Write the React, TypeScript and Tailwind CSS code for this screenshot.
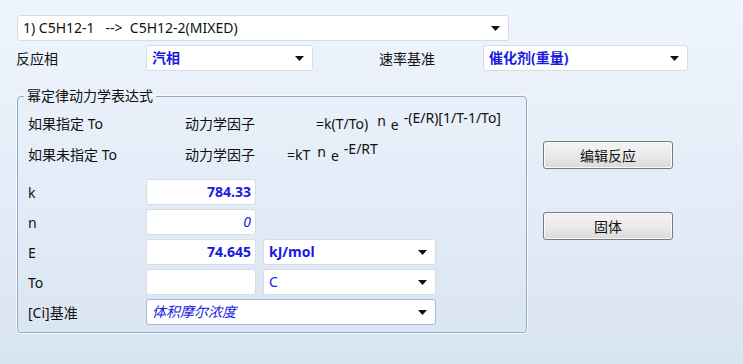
// 幂定律动力学设置面板（静态还原）
const font = "font-['Noto_Sans','Noto_Sans_CJK_SC',sans-serif]"

function Arrow() {
  return (
    <svg width="9" height="5" viewBox="0 0 9 5" aria-hidden="true" className="flex-none">
      <path d="M0 0h9L4.5 5z" fill="#111" />
    </svg>
  )
}

function Combo({ width, text, tone = 'bold', focused = false }: { width: string; text: string; tone?: 'bold' | 'plain' | 'italic' | 'black'; focused?: boolean }) {
  const toneCls =
    tone === 'bold'
      ? 'font-bold text-[#1a1adf]'
      : tone === 'italic'
        ? 'italic text-[#1a1adf]'
        : tone === 'black'
          ? 'text-[#111]'
          : 'text-[#1a1adf]'
  return (
    <div
      className={`${width} flex h-[26px] flex-none items-center justify-between rounded-[3px] border bg-white pl-[5px] pr-[8px] ${
        focused ? 'border-[#9fbadb]' : 'border-[#d6dde6]'
      }`}
    >
      <span className={`whitespace-pre text-[14px] leading-none ${toneCls}`}>{text}</span>
      <Arrow />
    </div>
  )
}

function Field({ value, italic = false }: { value: string; italic?: boolean }) {
  return (
    <div className="flex h-[26px] w-[110px] flex-none items-center justify-end rounded-[3px] border border-[#d6dde6] bg-white pr-[4px]">
      <span className={`text-[14px] leading-none text-[#1a1adf] ${italic ? 'italic' : 'font-bold'}`}>{value}</span>
    </div>
  )
}

function Row({ label, children }: { label: string; children: React.ReactNode }) {
  return (
    <div className="flex h-[26px] items-center">
      <span className="w-[118px] flex-none text-[14px] text-[#111]">{label}</span>
      <div className="flex gap-[7px]">{children}</div>
    </div>
  )
}

function Btn({ label }: { label: string }) {
  return (
    <button
      type="button"
      className="h-[28px] w-[130px] rounded-[3px] border border-[#7a7a7a] bg-gradient-to-b from-[#f3f3f3] via-[#ebebeb] to-[#d9d9d9] text-[14px] text-[#111] shadow-[inset_0_0_0_1px_#fafafa]"
    >
      {label}
    </button>
  )
}

export default function App() {
  return (
    <div className={`${font} h-[364px] w-[743px] overflow-hidden bg-gradient-to-b from-[#eff5fd] to-[#d9e4f2] pl-[17px] pt-[15px]`}>
      <Combo width="w-[492px]" text="1) C5H12-1   -->  C5H12-2(MIXED)" tone="black" />

      <div className="mt-[4px] flex h-[26px] items-center">
        <span className="-ml-[1px] w-[130px] text-[14px] text-[#111]">反应相</span>
        <Combo width="w-[167px]" text="汽相" />
        <span className="ml-[66px] w-[104px] text-[14px] text-[#111]">速率基准</span>
        <Combo width="w-[205px]" text="催化剂(重量)" />
      </div>

      <div className="mt-[17px] flex items-start">
        <fieldset className="h-[245px] w-[510px] flex-none rounded-[4px] border border-[#8ea9c9] pl-[10px] shadow-[0_0_0_1px_#f7fbff]">
          <legend className="-ml-[4px] px-[3px] text-[14px] leading-[16px] text-[#111]">幂定律动力学表达式</legend>

          <div className="mt-[9px] flex h-[20px] items-center text-[14px] text-[#111]">
            <span className="w-[157px] flex-none">如果指定 To</span>
            <span className="w-[131px] flex-none">动力学因子</span>
            <span>=k(T/To)</span>
            <span className="relative -top-[3px] ml-[9px]">n</span>
            <span className="relative top-[1px] ml-[5px]">e</span>
            <span className="relative -top-[6px] ml-[5px]">-(E/R)[1/T-1/To]</span>
          </div>

          <div className="mt-[11px] flex h-[20px] items-center text-[14px] text-[#111]">
            <span className="w-[157px] flex-none">如果未指定 To</span>
            <span className="w-[102px] flex-none">动力学因子</span>
            <span>=kT</span>
            <span className="relative -top-[3px] ml-[7px]">n</span>
            <span className="relative top-[1px] ml-[5px]">e</span>
            <span className="relative -top-[6px] ml-[5px]">-E/RT</span>
          </div>

          <div className="mt-[15px] flex flex-col gap-[4px]">
            <Row label="k">
              <Field value="784.33" />
            </Row>
            <Row label="n">
              <Field value="0" italic />
            </Row>
            <Row label="E">
              <Field value="74.645" />
              <Combo width="w-[173px]" text="kJ/mol" />
            </Row>
            <Row label="To">
              <Field value="" />
              <Combo width="w-[173px]" text="C" tone="plain" />
            </Row>
            <Row label="[Ci]基准">
              <Combo width="w-[290px]" text="体积摩尔浓度" tone="italic" focused />
            </Row>
          </div>
        </fieldset>

        <div className="ml-[16px] mt-[53px] flex flex-col gap-[43px]">
          <Btn label="编辑反应" />
          <Btn label="固体" />
        </div>
      </div>
    </div>
  )
}
